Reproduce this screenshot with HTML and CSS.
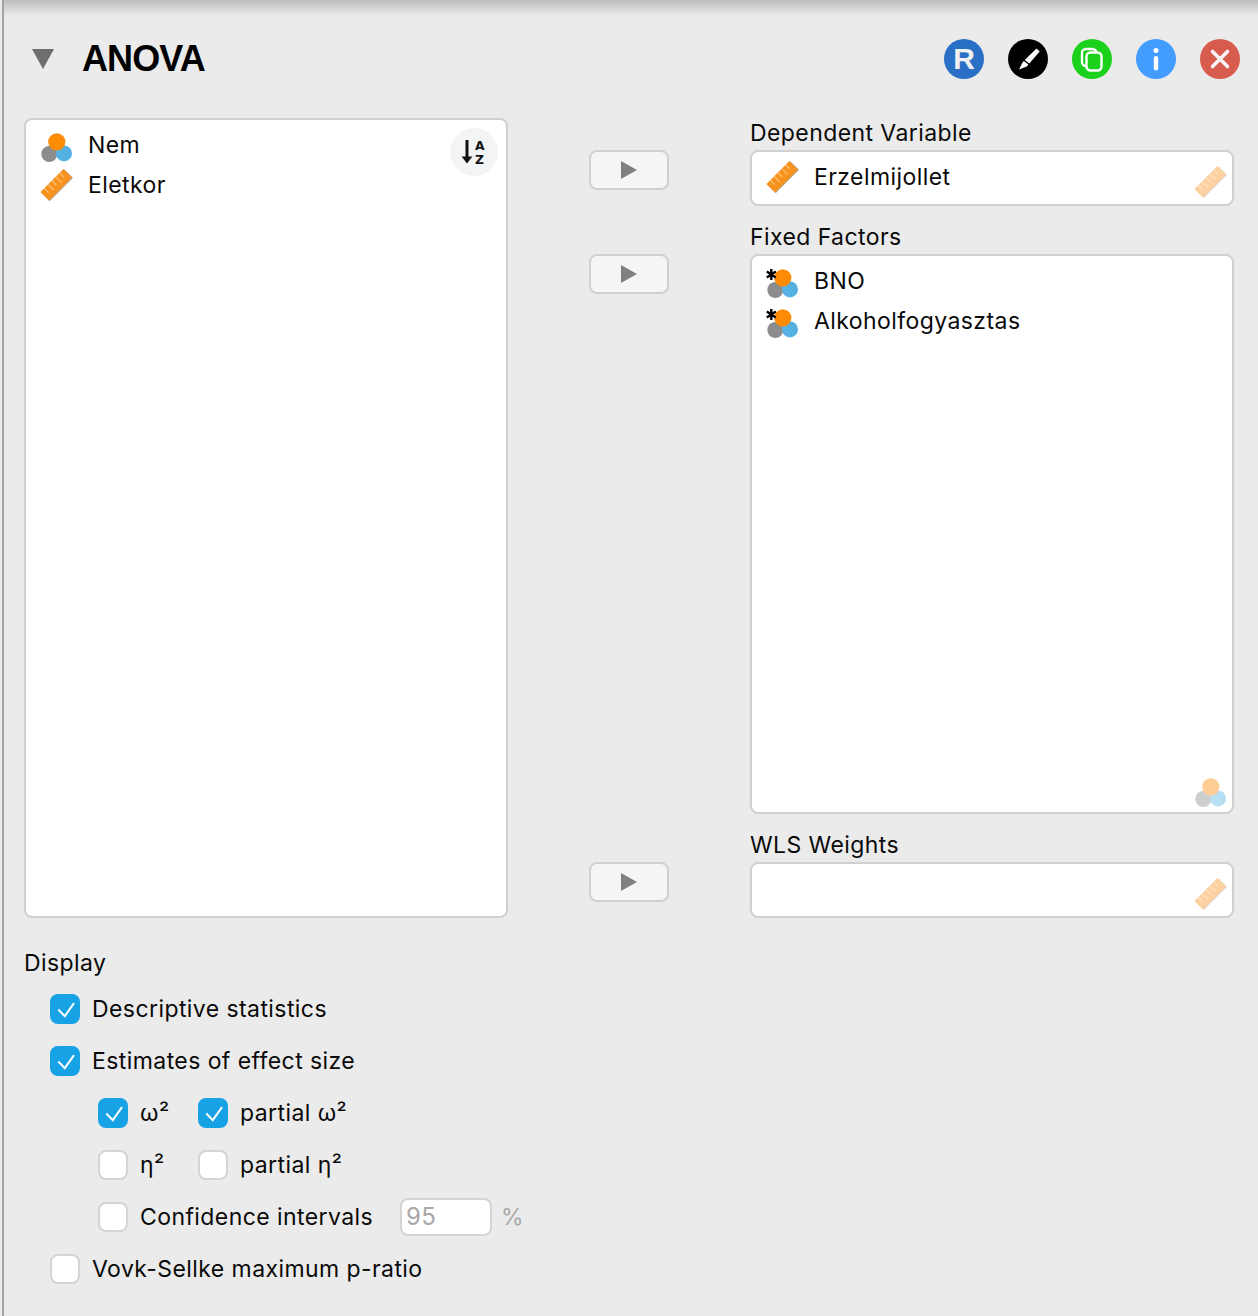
FILE: index.html
```html
<!DOCTYPE html>
<html lang="en">
<head>
<meta charset="utf-8">
<title>ANOVA</title>
<link rel="stylesheet" href="styles.css">
</head>
<body>
<svg class="defs" width="0" height="0" aria-hidden="true">
  <symbol id="nominal" viewBox="0 0 34 34">
    <circle cx="9.3" cy="26" r="8" fill="#8c8c8c"/>
    <circle cx="24" cy="25.4" r="8" fill="#55b1e2"/>
    <circle cx="16.8" cy="13.8" r="8.6" fill="#ff8c05"/>
  </symbol>
  <symbol id="ordinal-star" viewBox="0 0 34 34">
    <circle cx="9.3" cy="26" r="8" fill="#8c8c8c"/>
    <circle cx="24" cy="25.4" r="8" fill="#55b1e2"/>
    <circle cx="16.8" cy="13.8" r="8.6" fill="#ff8c05"/>
    <path d="M5.3 5v11M.8 7.6l9 5.8M9.8 7.6l-9 5.8" stroke="#000" stroke-width="2.4" fill="none"/>
  </symbol>
  <symbol id="ruler" viewBox="0 0 34 34">
    <g transform="rotate(-45 16.2 16.8)">
      <rect x="0" y="11.8" width="33" height="12" fill="#b9a58c"/>
      <rect x="0" y="10.8" width="32.4" height="12" fill="#f7921e"/>
      <path d="M5.4 10.8v6M10.8 10.8v8M16.2 10.8v6M21.6 10.8v8M27 10.8v6" stroke="#ffc98a" stroke-width="1" fill="none"/>
    </g>
  </symbol>
</svg>

<main class="panel">
  <div class="shade"></div>

  <header class="head">
    <span class="caret"></span>
    <h1 class="title">ANOVA</h1>
    <nav class="tools">
      <span class="tool tool-r">R</span>
      <span class="tool tool-edit">
        <svg viewBox="0 0 40 40" width="40" height="40"><path d="M28.5 9.6l3.2 2.8-10.4 12.2-4.6-3.6zM15.8 22l4.6 3.6-1.6 2-7.8 3 3.2-6.6z" fill="#fff"/></svg>
      </span>
      <span class="tool tool-copy">
        <svg viewBox="0 0 40 40" width="40" height="40"><rect x="10" y="10" width="14.5" height="17" rx="4" fill="none" stroke="#fff" stroke-width="2.4"/><rect x="14.5" y="13.5" width="15" height="18" rx="4" fill="#1bd11b" stroke="#fff" stroke-width="2.4"/></svg>
      </span>
      <span class="tool tool-info">
        <svg viewBox="0 0 40 40" width="40" height="40"><circle cx="20" cy="11.4" r="2.5" fill="#fff"/><rect x="17.8" y="17" width="4.4" height="14.4" rx="2.2" fill="#fff"/></svg>
      </span>
      <span class="tool tool-close">
        <svg viewBox="0 0 40 40" width="40" height="40"><path d="M12.5 12.5l15 15M27.5 12.5l-15 15" stroke="#f4f4f4" stroke-width="3.6" stroke-linecap="round" fill="none"/></svg>
      </span>
    </nav>
  </header>

  <section class="vars">
    <div class="source box">
      <div class="var"><svg class="ico"><use href="#nominal"/></svg><span>Nem</span></div>
      <div class="var"><svg class="ico"><use href="#ruler"/></svg><span>Eletkor</span></div>
      <button class="sort" type="button" aria-label="Sort">
        <svg viewBox="0 0 48 48" width="48" height="48">
          <path d="M17 12v20" stroke="#111" stroke-width="3" fill="none"/>
          <path d="M11.6 28.5h10.8L17 35.5z" fill="#111"/>
          <text x="25" y="21.5" class="sort-letter">A</text>
          <text x="25" y="36" class="sort-letter">Z</text>
        </svg>
      </button>
    </div>

    <button class="move" type="button" aria-label="Move"><span class="play"></span></button>
    <div class="field">
      <div class="field-label">Dependent Variable</div>
      <div class="box single">
        <div class="var"><svg class="ico"><use href="#ruler"/></svg><span>Erzelmijollet</span></div>
        <svg class="ico hint"><use href="#ruler"/></svg>
      </div>
    </div>

    <button class="move" type="button" aria-label="Move"><span class="play"></span></button>
    <div class="field">
      <div class="field-label">Fixed Factors</div>
      <div class="box tall">
        <div class="var"><svg class="ico"><use href="#ordinal-star"/></svg><span>BNO</span></div>
        <div class="var"><svg class="ico"><use href="#ordinal-star"/></svg><span>Alkoholfogyasztas</span></div>
        <svg class="ico hint"><use href="#nominal"/></svg>
      </div>
    </div>

    <button class="move" type="button" aria-label="Move"><span class="play"></span></button>
    <div class="field">
      <div class="field-label">WLS Weights</div>
      <div class="box single">
        <svg class="ico hint"><use href="#ruler"/></svg>
      </div>
    </div>
  </section>

  <section class="display">
    <div class="display-title">Display</div>
    <div class="row">
      <span class="check on"><svg viewBox="0 0 30 30" width="30" height="30"><path d="M8.3 15.5l6.5 6.6 9.2-13" class="tick"/></svg></span>
      <span class="lab">Descriptive statistics</span>
    </div>
    <div class="row">
      <span class="check on"><svg viewBox="0 0 30 30" width="30" height="30"><path d="M8.3 15.5l6.5 6.6 9.2-13" class="tick"/></svg></span>
      <span class="lab">Estimates of effect size</span>
    </div>
    <div class="row sub">
      <span class="cell">
        <span class="check on"><svg viewBox="0 0 30 30" width="30" height="30"><path d="M8.3 15.5l6.5 6.6 9.2-13" class="tick"/></svg></span>
        <span class="lab">ω²</span>
      </span>
      <span class="cell">
        <span class="check on"><svg viewBox="0 0 30 30" width="30" height="30"><path d="M8.3 15.5l6.5 6.6 9.2-13" class="tick"/></svg></span>
        <span class="lab">partial ω²</span>
      </span>
    </div>
    <div class="row sub">
      <span class="cell"><span class="check"></span><span class="lab">η²</span></span>
      <span class="cell"><span class="check"></span><span class="lab">partial η²</span></span>
    </div>
    <div class="row sub">
      <span class="check"></span>
      <span class="lab ci">Confidence intervals</span>
      <span class="num">95</span>
      <span class="pct">%</span>
    </div>
    <div class="row">
      <span class="check"></span>
      <span class="lab">Vovk-Sellke maximum p-ratio</span>
    </div>
  </section>
</main>
</body>
</html>
```

FILE: styles.css
```css
* { box-sizing: border-box; }

html, body {
  margin: 0;
  padding: 0;
  background: #ebebeb;
}

body {
  width: 1258px;
  height: 1316px;
  overflow: hidden;
  font-family: "Inter", "Liberation Sans", sans-serif;
  font-size: 23px;
  color: #0a0a0a;
}

.defs {
  position: absolute;
}

.panel {
  position: relative;
  height: 1316px;
  margin-left: 2px;
  border-left: 2px solid #a3a3a3;
  padding: 0 0 0 20px;
}

.shade {
  position: absolute;
  left: 0;
  right: 0;
  top: 0;
  height: 16px;
  background: linear-gradient(to bottom, #bdbdbd, #ebebeb);
}

.head {
  display: flex;
  align-items: center;
  height: 118px;
  padding: 0 18px 0 8px;
}

.caret {
  width: 0;
  height: 0;
  border-left: 11px solid transparent;
  border-right: 11px solid transparent;
  border-top: 20px solid #6e6e6e;
  margin-right: 29px;
}

.title {
  margin: 0 0 0 -1px;
  font-family: "Liberation Sans", Arial, sans-serif;
  font-size: 36px;
  font-weight: 700;
  letter-spacing: -0.9px;
  color: #000;
}

.tools {
  display: flex;
  gap: 24px;
  margin-left: auto;
}

.tool {
  display: flex;
  align-items: center;
  justify-content: center;
  width: 40px;
  height: 40px;
  border-radius: 50%;
}

.tool-r {
  background: #2a6fc6;
  color: #f0f0f0;
  font-family: "Liberation Sans", Arial, sans-serif;
  font-size: 30px;
  font-weight: 700;
}

.tool-edit { background: #000; }
.tool-copy { background: #1bd11b; }
.tool-info { background: #429dff; }
.tool-close { background: #d85c4e; }

.vars {
  display: grid;
  grid-template-columns: 484px 242px 484px;
  grid-template-rows: 88px 592px 88px;
  row-gap: 16px;
  width: 1210px;
}

.box {
  position: relative;
  background: #fff;
  border: 2px solid #d0d0d0;
  border-radius: 8px;
  padding: 5px 0 0 14px;
}

.source {
  grid-column: 1;
  grid-row: 1 / span 3;
}

.var {
  display: flex;
  align-items: center;
  height: 40px;
  letter-spacing: 0.42px;
}

.ico {
  flex: none;
  width: 34px;
  height: 34px;
  margin-right: 14px;
}

.hint {
  position: absolute;
  right: 4px;
  bottom: 5px;
  margin: 0;
  opacity: 0.42;
}

.sort {
  position: absolute;
  top: 8px;
  right: 8px;
  width: 48px;
  height: 48px;
  padding: 0;
  border: 0;
  border-radius: 50%;
  background: #f3f4f6;
}

.sort-letter {
  font-family: "DejaVu Sans", sans-serif;
  font-size: 12.4px;
  font-weight: 700;
  fill: #111;
}

.move {
  justify-self: center;
  align-self: start;
  display: flex;
  align-items: center;
  justify-content: center;
  width: 80px;
  height: 40px;
  margin-top: 32px;
  padding: 0;
  background: #f4f5f7;
  border: 2px solid #d0d0d0;
  border-radius: 8px;
}

.play {
  width: 0;
  height: 0;
  border-top: 9px solid transparent;
  border-bottom: 9px solid transparent;
  border-left: 16px solid #808080;
}

.field {
  display: flex;
  flex-direction: column;
  min-height: 0;
}

.field-label {
  height: 32px;
  line-height: 31px;
  letter-spacing: 0.42px;
}

.single {
  height: 56px;
}

.tall {
  flex: 1;
}

.display {
  padding-top: 26px;
}

.display-title {
  height: 39px;
  line-height: 39px;
  letter-spacing: 0.42px;
}

.row {
  display: flex;
  align-items: center;
  height: 52px;
  padding-left: 26px;
}

.row.sub {
  padding-left: 74px;
}

.cell {
  display: flex;
  align-items: center;
  width: 100px;
}

.check {
  flex: none;
  width: 30px;
  height: 30px;
  margin-right: 12px;
  background: #fff;
  border: 2px solid #d4d4d4;
  border-radius: 8px;
}

.check.on {
  background: #17a2e6;
  border: 0;
}

.tick {
  fill: none;
  stroke: #fff;
  stroke-width: 2;
}

.lab {
  letter-spacing: 0.42px;
  white-space: nowrap;
}

.ci {
  width: 260px;
}

.num {
  width: 92px;
  height: 38px;
  line-height: 34px;
  padding-left: 4px;
  background: #fff;
  border: 2px solid #d4d4d4;
  border-radius: 8px;
  font-size: 24px;
  letter-spacing: 0.4px;
  color: #a8a8a8;
}

.pct {
  margin-left: 9px;
  color: #a8a8a8;
}
```
